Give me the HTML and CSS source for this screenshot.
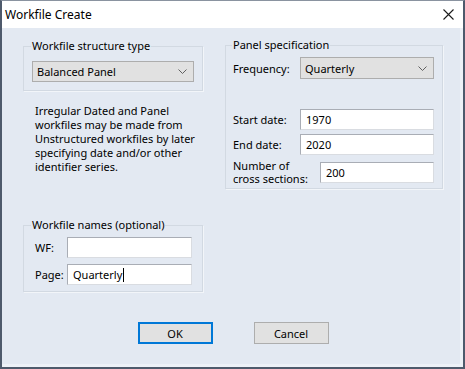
FILE: index.html
```html
<!DOCTYPE html>
<html lang="en">
<head>
  <meta charset="UTF-8">
  <title>Workfile Create</title>
  <link rel="stylesheet" href="styles.css">
</head>
<body>

  <div class="window">
    <!-- Title bar -->
    <div class="titlebar">
      <span class="title">Workfile Create</span>
      <svg class="close" width="11" height="11" viewBox="0 0 11 11">
        <path d="M0.5 0.5 L10.5 10.5 M10.5 0.5 L0.5 10.5" stroke="#1a1a1a" stroke-width="1.1" fill="none"/>
      </svg>
    </div>

    <!-- Dialog body -->
    <div class="client">
      <div class="columns">
        <div class="col-left">
          <fieldset class="group group-structure">
            <legend>Workfile structure type</legend>
            <div class="combo">
              <span>Balanced Panel</span>
              <svg class="chevron" width="9" height="5" viewBox="0 0 9 5"><path d="M0.5 0.5 L4.5 4.5 L8.5 0.5" stroke="#606060" fill="none"/></svg>
            </div>
          </fieldset>

          <p class="note">Irregular Dated and Panel<br>workfiles may be made from<br>Unstructured workfiles by later<br>specifying date and/or other<br>identifier series.</p>

          <fieldset class="group group-names">
            <legend>Workfile names (optional)</legend>
            <div class="row">
              <label class="lbl-short">WF:</label>
              <div class="edit edit-name"></div>
            </div>
            <div class="row row-page">
              <label class="lbl-short">Page:</label>
              <div class="edit edit-name">Quarterly<span class="caret"></span></div>
            </div>
          </fieldset>
        </div>

        <div class="col-right">
          <fieldset class="group group-panel">
            <legend>Panel specification</legend>
            <div class="row">
              <label class="lbl">Frequency:</label>
              <div class="combo combo-freq">
                <span>Quarterly</span>
                <svg class="chevron" width="9" height="5" viewBox="0 0 9 5"><path d="M0.5 0.5 L4.5 4.5 L8.5 0.5" stroke="#606060" fill="none"/></svg>
              </div>
            </div>
            <div class="row row-start">
              <label class="lbl">Start date:</label>
              <div class="edit edit-date">1970</div>
            </div>
            <div class="row row-end">
              <label class="lbl">End date:</label>
              <div class="edit edit-date">2020</div>
            </div>
            <div class="row row-cross">
              <label class="lbl lbl-wide">Number of<br>cross sections:</label>
              <div class="edit edit-cross">200</div>
            </div>
          </fieldset>
        </div>
      </div>

      <div class="buttons">
        <button class="btn btn-default">OK</button>
        <button class="btn">Cancel</button>
      </div>
    </div>
  </div>

</body>
</html>
```

FILE: styles.css
```css
body {
  margin: 0;
  padding: 0;
  font-family: 'Noto Sans', 'Open Sans', sans-serif;
  font-size: 11px;
  color: #000;
}

/* Window frame */
.window {
  width: 465px;
  height: 369px;
  box-sizing: border-box;
  border-top: 1px solid #8a93a0;
  border-left: 2px solid #4e5a6c;
  border-right: 2px solid #4e5a6c;
  border-bottom: 2px solid #4e5a6c;
  display: flex;
  flex-direction: column;
}

.titlebar {
  height: 27px;
  background-color: #fff;
  display: flex;
  align-items: center;
  justify-content: space-between;
  padding: 0 9px 0 3px;
}

.title {
  font-size: 12px;
}

.close {
  display: block;
}

.client {
  flex: 1;
  background-color: #e3e9f2;
  box-shadow: inset -3px -3px 0 #edf1f7;
  display: flex;
  flex-direction: column;
}

.columns {
  display: flex;
  gap: 22px;
  padding: 10px 0 0 21px;
}

.col-left {
  width: 180px;
}

.col-right {
  width: 218px;
  margin-top: -1px;
}

/* Group boxes */
.group {
  margin: 0;
  padding: 0 8px 8px;
  border: 1px solid #d2d9e2;
  box-shadow: 1px 1px 0 #f2f5f9;
  min-width: 0;
}

.group legend {
  padding: 0 1px;
  margin-left: -1px;
  line-height: 16px;
}

.group-structure .combo {
  margin-top: 7px;
}

.group-names {
  margin-top: 43px;
  padding: 0 10px 6px 8px;
}

.group-panel {
  padding: 0 8px 3px 7px;
}

/* Controls */
.combo {
  height: 21px;
  box-sizing: border-box;
  background-color: #e1e1e1;
  border: 1px solid #adadad;
  display: flex;
  align-items: center;
  justify-content: space-between;
  padding: 0 6px 0 4px;
}

.combo-freq {
  flex: 1;
  height: 22px;
}

.edit {
  height: 21px;
  box-sizing: border-box;
  background-color: #fff;
  border: 1px solid #a9adb5;
  border-right-color: #d9dce1;
  border-bottom-color: #d9dce1;
  padding: 0 0 0 5px;
  display: flex;
  align-items: center;
}

.edit-name {
  width: 125px;
}

.edit-date,
.edit-cross {
  flex: 1;
}

.caret {
  display: inline-block;
  width: 1px;
  height: 14px;
  background-color: #000;
  margin-left: 1px;
}

.row {
  display: flex;
  align-items: center;
}

.group-names .row {
  margin-top: 4px;
  padding-left: 3px;
}

.group-names .row-page {
  margin-top: 6px;
}

.lbl-short {
  width: 32px;
}

.lbl {
  width: 67px;
  flex-shrink: 0;
}

.lbl-wide {
  width: 87px;
  line-height: 13px;
}

.group-panel .row {
  margin-top: 4px;
}

.group-panel .row-start {
  margin-top: 30px;
}

.group-panel .row-cross {
  margin-top: 4px;
}

.note {
  margin: 13px 0 0 12px;
  line-height: 14px;
  white-space: nowrap;
}

/* Buttons */
.buttons {
  display: flex;
  justify-content: center;
  gap: 41px;
  margin-top: 30px;
  padding-left: 1px;
}

.btn {
  width: 75px;
  height: 22px;
  box-sizing: border-box;
  background-color: #e1e1e1;
  border: 1px solid #adadad;
  font-family: 'Noto Sans', 'Open Sans', sans-serif;
  font-size: 11px;
  color: #000;
  padding: 0;
}

.btn-default {
  border: 2px solid #0078d7;
}
```
